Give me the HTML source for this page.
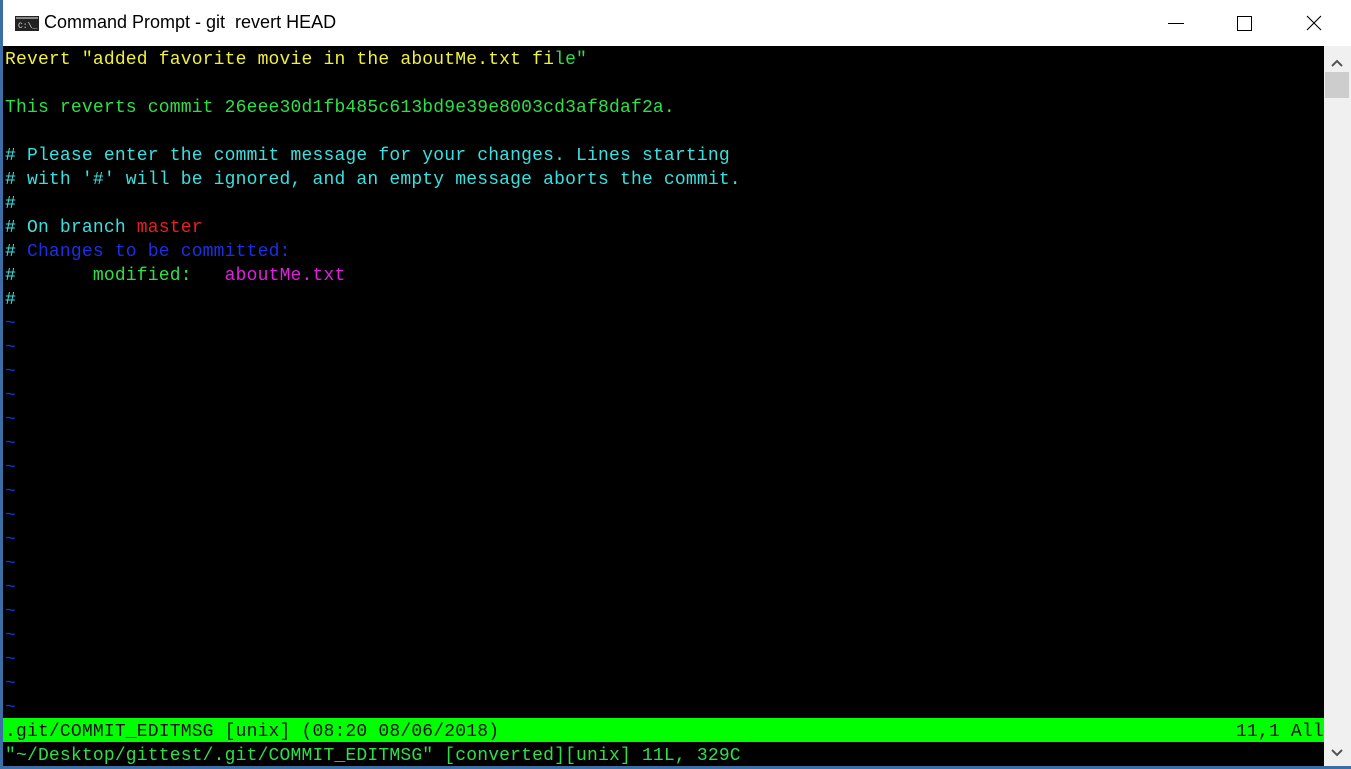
<!DOCTYPE html>
<html><head><style>
html,body{margin:0;padding:0;width:1351px;height:769px;overflow:hidden;background:#fff;font-family:"Liberation Sans",sans-serif}
#title{position:absolute;left:0;top:0;width:1351px;height:46px;background:#fff}
#title .t{position:absolute;left:44px;top:12px;font-size:18px;color:#000}
#term{position:absolute;left:3px;top:46px;width:1321px;height:720px;background:#000}
#bl{position:absolute;left:0;top:0;width:3px;height:769px;background:#3a6ea5}
#bb{position:absolute;left:0;top:766px;width:1351px;height:3px;background:#3a6ea5}
#sb{position:absolute;left:1324px;top:46px;width:27px;height:720px;background:#f0f0f0}
.l{position:absolute;left:5px;height:24px;line-height:24px;padding-top:2px;box-sizing:border-box;font-family:"Liberation Mono",monospace;font-size:18px;letter-spacing:0.18px;white-space:pre;color:#3ae0e0}
.y{color:#f0f040}.g{color:#2ee048}.c{color:#3ae0e0}.r{color:#e82020}.b{color:#1830e8}.m{color:#e020e0}
</style></head><body>
<div id="title">
<svg style="position:absolute;left:15px;top:16px" width="24" height="15"><rect width="24" height="15" fill="#222"/><rect x="1" y="1" width="22" height="2" fill="#888"/><text x="3" y="12" font-size="8" font-family="Liberation Mono" fill="#ddd">C:\_</text></svg>
<div class="t">Command Prompt - git&nbsp; revert HEAD</div>
<div style="position:absolute;left:1168px;top:23px;width:16px;height:1px;background:#000"></div>
<div style="position:absolute;left:1237px;top:16px;width:13px;height:13px;border:1px solid #000"></div>
<svg style="position:absolute;left:1306px;top:15px" width="16" height="16"><path d="M1 1L15 15M15 1L1 15" stroke="#000" stroke-width="1.1"/></svg>
</div>
<div id="bl"></div>
<div id="term"></div>
<div id="sb">
<svg style="position:absolute;left:6px;top:12px" width="14" height="10"><path d="M2 8L7 3L12 8" stroke="#555" stroke-width="2" fill="none"/></svg>
<div style="position:absolute;left:1px;top:26px;width:24px;height:26px;background:#cdcdcd"></div>
<svg style="position:absolute;left:6px;top:702px" width="14" height="10"><path d="M2 2L7 7L12 2" stroke="#555" stroke-width="2" fill="none"/></svg>
</div>
<div class="l y" style="top:46px">Revert "added favorite movie in the aboutMe.txt fi<span class="g">le"</span></div>
<div class="l g" style="top:94px">This reverts commit 26eee30d1fb485c613bd9e39e8003cd3af8daf2a.</div>
<div class="l" style="top:142px"># Please enter the commit message for your changes. Lines starting</div>
<div class="l" style="top:166px"># with '#' will be ignored, and an empty message aborts the commit.</div>
<div class="l" style="top:190px">#</div>
<div class="l" style="top:214px"># On branch <span class="r">master</span></div>
<div class="l" style="top:238px"># <span class="b">Changes to be committed:</span></div>
<div class="l" style="top:262px">#       <span class="g">modified:</span>   <span class="m">aboutMe.txt</span></div>
<div class="l" style="top:286px">#</div>
<div class="l b" style="top:310px">~</div><div class="l b" style="top:334px">~</div><div class="l b" style="top:358px">~</div><div class="l b" style="top:382px">~</div><div class="l b" style="top:406px">~</div><div class="l b" style="top:430px">~</div><div class="l b" style="top:454px">~</div><div class="l b" style="top:478px">~</div><div class="l b" style="top:502px">~</div><div class="l b" style="top:526px">~</div><div class="l b" style="top:550px">~</div><div class="l b" style="top:574px">~</div><div class="l b" style="top:598px">~</div><div class="l b" style="top:622px">~</div><div class="l b" style="top:646px">~</div><div class="l b" style="top:670px">~</div><div class="l b" style="top:694px">~</div>
<div style="position:absolute;left:3px;top:718px;width:1321px;height:24px;background:#00ff00"></div>
<div class="l" style="top:718px;color:#111">.git/COMMIT_EDITMSG [unix] (08:20 08/06/2018)</div>
<div class="l" style="top:718px;left:1236px;color:#111">11,1 All</div>
<div class="l g" style="top:742px">"~/Desktop/gittest/.git/COMMIT_EDITMSG" [converted][unix] 11L, 329C</div>
<div id="bb"></div>
</body></html>
